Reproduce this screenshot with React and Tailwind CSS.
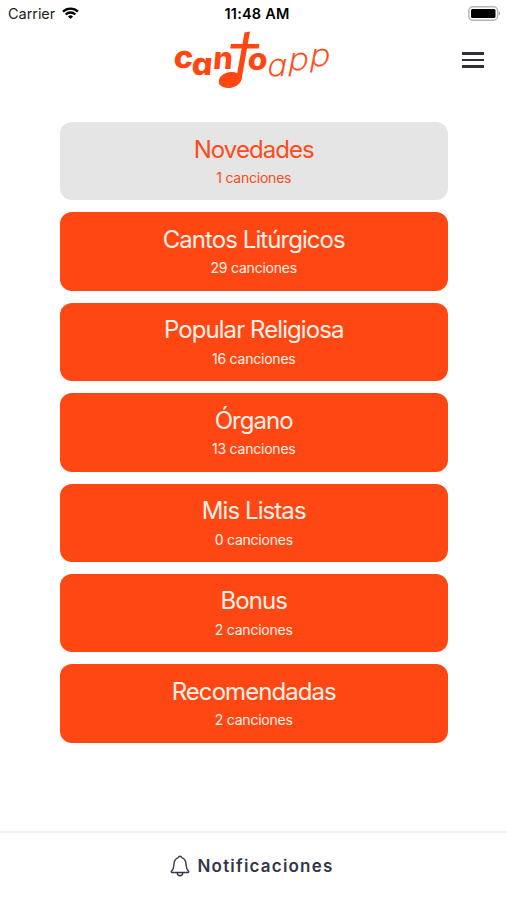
import React, { useState } from 'react';

const categories = [
  { title: 'Novedades', count: 1 },
  { title: 'Cantos Litúrgicos', count: 29 },
  { title: 'Popular Religiosa', count: 16 },
  { title: 'Órgano', count: 13 },
  { title: 'Mis Listas', count: 0 },
  { title: 'Bonus', count: 2 },
  { title: 'Recomendadas', count: 2 },
];

const StatusBar = () => (
  <div className="grid h-7 grid-cols-3 items-center pl-2 pr-[7px] text-[14.5px] text-black">
    <div className="flex items-center gap-[7px]">
      <span className="text-[#222] tracking-[-0.05px]">Carrier</span>
      <svg className="-mt-[2px] h-3 w-[17px]" viewBox="0 0 17 12" fill="none" stroke="#000" strokeWidth="2.3">
        <path d="M1 4.6a10.7 10.7 0 0 1 15 0" />
        <path d="M3.7 7.5a6.8 6.8 0 0 1 9.6 0" />
        <path d="M8.5 12 6 9.4a3.6 3.6 0 0 1 5 0z" fill="#000" stroke="none" />
      </svg>
    </div>
    <span className="pl-[6px] text-center font-semibold tracking-[0.2px]">11:48 AM</span>
    <svg className="-mt-[2px] h-[15px] w-[33px] justify-self-end" viewBox="0 0 33 15">
      <rect x="1.8" y="0.8" width="28.8" height="13.4" rx="4" fill="#fff" stroke="#b5b5b5" strokeWidth="1.4" />
      <rect x="4" y="3" width="24.5" height="9" rx="1.5" fill="#000" />
      <path d="M31.8 5.5v4c.8-.4 1.1-1.1 1.1-2s-.3-1.6-1.1-2z" fill="#999" />
    </svg>
  </div>
);

const Logo = () => (
  <svg
    className="h-[75px] w-[180px]"
    viewBox="0 0 180 75"
    fill="#ff4713"
    fontFamily="Inter, sans-serif"
    style={{ fontFeatureSettings: '"cv11"' }}
  >
    <g fontSize="31" fontWeight="800">
      <text transform="translate(12 46) skewX(-5) scale(1.05 1)">c</text>
      <text transform="translate(30 53.2) skewX(-5) scale(1.05 1)">a</text>
      <text transform="translate(51.5 47.3) skewX(-5)">n</text>
      <text transform="translate(86 47.7) skewX(-5) scale(1.03 1)">o</text>
    </g>
    <path d="M83.5 10.5 89 9.5 80.5 58H75z" />
    <path d="M70 22h28.5l-.8 4.5H69.2z" />
    <ellipse cx="69" cy="58" rx="11.5" ry="7.8" transform="rotate(-12 69 58)" />
    <g fontSize="31" fontWeight="200" stroke="#ff4713" strokeWidth="0.4">
      <text transform="translate(105 53.5) skewX(-11) scale(1.06 1)">a</text>
      <text transform="translate(126 47.7) skewX(-11) scale(1.1 1)">p</text>
      <text transform="translate(147.5 43.5) skewX(-11) scale(1.1 1)">p</text>
    </g>
  </svg>
);

const CategoryButton = ({ title, count, active, onClick }) => (
  <button
    onClick={onClick}
    className={`flex h-[78.4px] w-full flex-col items-center rounded-[12px] pt-[11.5px] ${
      active ? 'bg-[#e5e5e5] text-[#f94d20]' : 'bg-[#ff4713] text-[#fff1e8]'
    }`}
  >
    <span className="text-2xl leading-8 tracking-[-0.93px]">{title}</span>
    <span className="mt-[2.5px] text-sm leading-5 tracking-[-0.22px]">{count} canciones</span>
  </button>
);

const App = () => {
  const [selected, setSelected] = useState('Novedades');

  return (
    <div className="flex h-[900px] w-[507px] flex-col overflow-hidden bg-white font-['Inter',sans-serif]">
      <StatusBar />
      <header className="grid h-[94px] grid-cols-[1fr_180px_1fr]">
        <div className="col-start-2 -mt-[6px] -ml-[3px]">
          <Logo />
        </div>
        <button className="mt-[24px] mr-[23px] flex h-[15.5px] w-[22px] flex-col justify-between justify-self-end" aria-label="Menú">
          <span className="h-[2.5px] w-full bg-[#303039]" />
          <span className="h-[2.5px] w-full bg-[#303039]" />
          <span className="h-[2.5px] w-full bg-[#303039]" />
        </button>
      </header>
      <main className="flex flex-1 flex-col gap-3 pr-[59px] pl-[59.5px]">
        {categories.map((item) => (
          <CategoryButton
            key={item.title}
            title={item.title}
            count={item.count}
            active={selected === item.title}
            onClick={() => setSelected(item.title)}
          />
        ))}
      </main>
      <footer className="flex h-[69px] items-center justify-center gap-[8px] border-t-2 border-[#f0f0f0] pr-[4px] text-[#34364a]">
        <svg className="-mt-px h-[22px] w-5" viewBox="0 0 20 22" fill="none" stroke="currentColor" strokeWidth="1.4" strokeLinejoin="round">
          <path d="M10 1.2C9.1 1.2 8.6 1.7 8.3 2.6 5.3 3.5 4.2 5.7 4 8.8c-.2 4-.6 5.8-2.4 7.3-.6.6-.3 1.4.5 1.4h15.800c.8 0 1.1-.8.5-1.4-1.8-1.5-2.2-3.3-2.4-7.3-.2-3.1-1.3-5.3-4.3-6.2C11.400 1.7 10.9 1.2 10 1.2z" />
          <path d="M7.2 17.7c.2 1.9 1.3 3.1 2.8 3.1s2.6-1.2 2.8-3.1" />
        </svg>
        <span className="text-[17px] font-semibold tracking-[1.2px]">Notificaciones</span>
      </footer>
    </div>
  );
};

export default App;
